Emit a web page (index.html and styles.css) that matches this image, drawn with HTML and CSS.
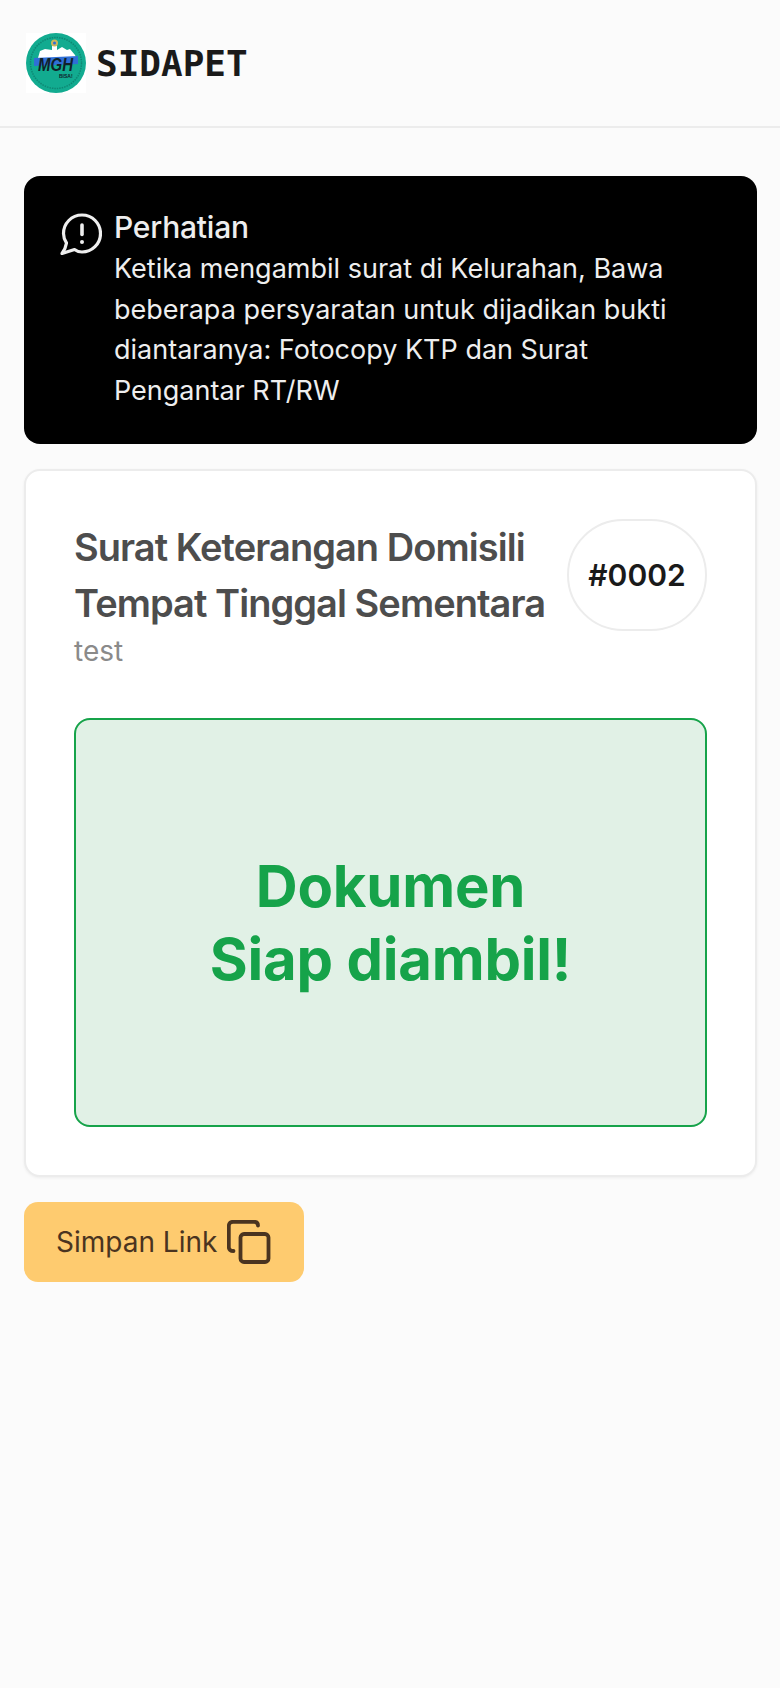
FILE: index.html
```html
<!DOCTYPE html>
<html lang="en">
<head>
    <meta charset="UTF-8">
    <meta name="viewport" content="width=device-width, initial-scale=1.0">
    <title>SIDAPET</title>
    <link rel="stylesheet" href="styles.css">
</head>
<body>
    <header class="navbar">
        <svg class="logo" viewBox="0 0 60 60">
            <rect width="60" height="60" fill="#fff"/>
            <circle cx="30" cy="30" r="30" fill="#12ab90"/>
            <circle cx="30" cy="30" r="25.500" fill="none" stroke="#0c6f60" stroke-width="1.500" stroke-dasharray="1.500 1" opacity="0.6"/>
            <path d="M12 25 L14 18 L19 16 L26 17 L26 11 L31 11 L31 17 L36 14 L41 17 L44 16 L49 22 L51 27 L12 30 Z" fill="#fff"/>
            <circle cx="28.500" cy="10" r="3.500" fill="#c9b65c"/>
            <circle cx="28.500" cy="10" r="1.500" fill="#2f6fd6"/>
            <path d="M8 25 L52 23 V31 L8 33 Z" fill="#2f6fd6"/>
            <text class="logo-mark" x="12" y="38" textLength="35" lengthAdjust="spacingAndGlyphs">MGH</text>
            <text class="logo-sub" x="33" y="45">BISA!</text>
        </svg>
        <span class="brand">SIDAPET</span>
    </header>

    <main class="content">
        <div class="alert">
            <svg class="alert-icon" viewBox="0 0 42 42" fill="none" stroke="currentColor" stroke-width="3.200" stroke-linecap="round" stroke-linejoin="round">
                <path d="M6.500 30 C4.500 27 3.500 24 3.500 20.500 C3.500 10.500 11.500 2 22 2 C32.500 2 40.500 10.500 40.500 20.500 C40.500 31 32 39 22 39 C19 39 16.500 38 14.500 36.500 L2 40.500 C4.500 37 6 33.500 6.500 30 Z"/>
                <path d="M22 12 V21.500" stroke-width="3.600"/>
                <path d="M22 29 V29.100" stroke-width="4"/>
            </svg>
            <div>
                <h2 class="alert-title">Perhatian</h2>
                <p class="alert-text">Ketika mengambil surat di Kelurahan, Bawa beberapa persyaratan untuk dijadikan bukti diantaranya: Fotocopy KTP dan Surat Pengantar RT/RW</p>
            </div>
        </div>

        <section class="card">
            <div class="card-head">
                <div>
                    <h1 class="card-title">Surat Keterangan Domisili Tempat Tinggal Sementara</h1>
                    <p class="card-sub">test</p>
                </div>
                <div class="badge">#0002</div>
            </div>
            <div class="status">Dokumen<br>Siap diambil!</div>
        </section>

        <button class="btn-save" type="button">
            Simpan Link
            <svg class="copy-icon" viewBox="0 0 44 44" fill="none" stroke="currentColor" stroke-width="3.800" stroke-linecap="round" stroke-linejoin="round">
                <rect x="13.500" y="14" width="28" height="28" rx="3.500"/>
                <path d="M6.500 31 C3.500 31 1.800 29.500 1.800 27 V6 C1.800 3.500 3.500 1.800 6 1.800 H27 C29.500 1.800 31 3.200 31 5.500"/>
            </svg>
        </button>
    </main>
</body>
</html>
```

FILE: styles.css
```css
body {
    margin: 0;
    min-height: 1688px;
    background: #fbfbfb;
    font-family: Inter, "Liberation Sans", sans-serif;
    color: #1a1a1a;
}

.navbar {
    display: flex;
    align-items: center;
    gap: 10px;
    height: 126px;
    padding: 0 26px;
    border-bottom: 2px solid #ececec;
}

.logo {
    width: 60px;
    height: 60px;
    flex: none;
}

.logo-mark {
    font-family: "Liberation Sans", sans-serif;
    font-size: 19px;
    font-style: italic;
    font-weight: 700;
    fill: #10222a;
}

.logo-sub {
    font-family: "Liberation Sans", sans-serif;
    font-size: 5px;
    font-weight: 700;
    fill: #10222a;
}

.brand {
    font-family: "DejaVu Sans Mono", monospace;
    font-size: 36px;
    font-weight: 700;
    color: #1a1a1a;
}

.content {
    display: flex;
    flex-direction: column;
    align-items: flex-start;
    padding: 48px 23px 0 24px;
}

.alert {
    display: flex;
    gap: 12px;
    box-sizing: border-box;
    width: 100%;
    height: 268px;
    padding: 32px 36px;
    background: #000;
    border-radius: 16px;
    color: #eee;
}

.alert-icon {
    width: 42px;
    height: 42px;
    flex: none;
    margin-top: 5px;
}

.alert-title {
    margin: 0 0 3px;
    font-size: 30px;
    line-height: 38px;
    font-weight: 500;
    letter-spacing: -0.2px;
}

.alert-text {
    margin: 0;
    font-size: 27px;
    line-height: 40.500px;
}

.card {
    box-sizing: border-box;
    width: 100%;
    margin-top: 25px;
    padding: 48px;
    background: #fff;
    border: 2px solid #ececec;
    border-radius: 16px;
    box-shadow: 0 1px 3px rgba(0, 0, 0, 0.06);
}

.card-head {
    display: flex;
    align-items: flex-start;
    justify-content: space-between;
    gap: 20px;
}

.card-title {
    margin: 0;
    font-size: 38px;
    line-height: 56px;
    font-weight: 600;
    letter-spacing: -0.950px;
    color: #4d4d4d;
}

.card-sub {
    margin: 0;
    font-size: 28px;
    line-height: 40px;
    color: #8a8a8a;
}

.badge {
    display: flex;
    align-items: center;
    justify-content: center;
    box-sizing: border-box;
    flex: none;
    width: 140px;
    height: 112px;
    border: 2px solid #ececec;
    border-radius: 56px;
    font-size: 30px;
    font-weight: 600;
}

.status {
    display: flex;
    align-items: center;
    justify-content: center;
    box-sizing: border-box;
    height: 409px;
    margin-top: 47px;
    background: #e1f1e6;
    border: 2px solid #16a34a;
    border-radius: 16px;
    color: #16a34a;
    font-size: 58px;
    line-height: 73px;
    font-weight: 700;
    letter-spacing: -0.200px;
    text-align: center;
}

.btn-save {
    display: flex;
    align-items: center;
    gap: 10px;
    box-sizing: border-box;
    height: 80px;
    width: 280px;
    margin-top: 25px;
    padding: 0 32px;
    background: #fecb6f;
    border: none;
    border-radius: 14px;
    color: #4a3420;
    font-family: inherit;
    font-size: 28px;
}

.copy-icon {
    width: 44px;
    height: 44px;
    flex: none;
}
```
